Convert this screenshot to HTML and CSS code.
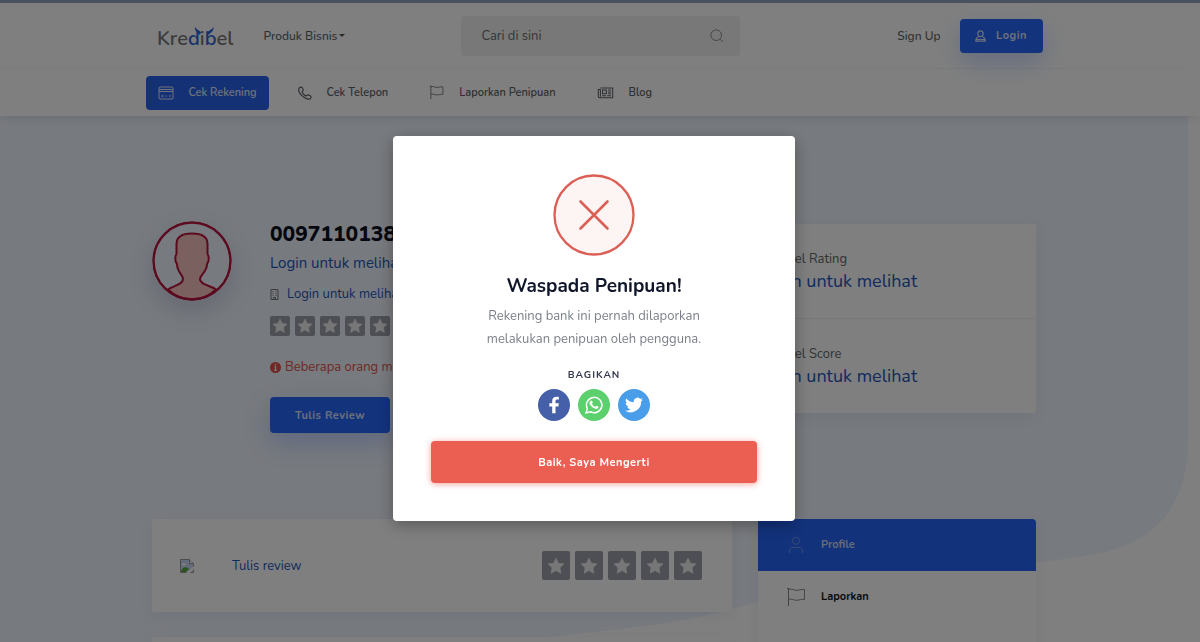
FILE: index.html
```html
<!DOCTYPE html>
<html lang="id">
<head>
  <meta charset="UTF-8">
  <meta name="viewport" content="width=device-width, initial-scale=1">
  <title>Kredibel</title>
  <link rel="stylesheet" href="styles.css">
</head>
<body class="modal-open">
  <svg class="sprite" aria-hidden="true">
    <symbol id="star" viewBox="0 0 24 24"><path d="M12 1.5l3.2 6.7 7.3 1-5.3 5.1 1.3 7.3L12 18l-6.5 3.6 1.3-7.3L1.5 9.2l7.3-1z" stroke="currentColor" stroke-linejoin="round" fill="currentColor"/></symbol>
    <symbol id="flag" viewBox="0 0 20 20"><path d="M2.500 19V1.500M2.500 2.500c3-1.500 5 .8 8 .8s4.500-1.300 8-.8v10c-3.500-.6-5 .8-8 .8s-5-2-8-.8M1 1.500h2" fill="none" stroke="currentColor"/></symbol>
    <symbol id="news" viewBox="0 0 20 16"><path d="M4 2h14.500v11.500H3A1.500 1.500 0 0 1 1.500 12V4H4v8.500M6.500 4.500h4.500v4.500H6.500zM13 4.500h3.500M13 6.700h3.500M13 9h3.500M6 11.300h4.500M12 11.300h4.500" fill="none" stroke="currentColor" stroke-width="1.200"/></symbol>
  </svg>

  <div class="topline"></div>
  <header class="header">
    <div class="header-top">
      <div class="header-inner">
        <a href="#" class="logo" aria-label="Kredibel">
          <svg width="78" height="34" viewBox="0 0 78 34">
            <text x="0" y="26" class="logo-text">Kre<tspan class="logo-blue">d</tspan>i<tspan class="logo-blue">b</tspan>el</text>
            <path class="logo-flame" d="M42.500 16c-1-2.500-5.500-3.500-4.500-8.500.8 3.500 5.500 3.500 6 6.500zM52 16c1-2.500 5.500-3.500 4.500-8.500-.8 3.500-5.500 3.500-6 6.500z"/>
          </svg>
        </a>
        <a href="#" class="menu-link">Produk Bisnis<span class="caret"></span></a>
        <form class="search">
          <input type="text" placeholder="Cari di sini" aria-label="Cari di sini">
          <button type="button" aria-label="Cari">
            <svg width="14" height="14" viewBox="0 0 14 14"><path d="M10.200 10.200L13 13M11.500 6.200a5.300 5.300 0 1 1-10.600 0 5.300 5.300 0 0 1 10.600 0z" fill="none" stroke="currentColor"/></svg>
          </button>
        </form>
        <a href="#" class="menu-link signup">Sign Up</a>
        <button type="button" class="btn btn-login">
          <svg width="11" height="12" viewBox="0 0 11 12"><path d="M8.200 3.800a2.700 2.900 0 1 1-5.400 0 2.700 2.900 0 0 1 5.400 0zM3.500 6.800C1.500 7.500.8 8.700.8 11.200h9.400c0-2.500-.7-3.700-2.700-4.400M1 9.500h9" fill="none" stroke="currentColor" stroke-width="1.200"/></svg>
          Login
        </button>
      </div>
    </div>
    <nav class="header-inner tabs">
      <a href="#" class="tab active">
        <svg width="16" height="14" viewBox="0 0 16 14"><path d="M2 1h12a1 1 0 0 1 1 1v10a1 1 0 0 1-1 1H2a1 1 0 0 1-1-1V2a1 1 0 0 1 1-1zM1 3.500h14M1 5.500h14M3 10h3M7.500 10h1.500M11 10h2" fill="none" stroke="currentColor"/></svg>
        Cek Rekening
      </a>
      <a href="#" class="tab">
        <svg width="14" height="14" viewBox="0 0 14 14"><path d="M1.500 1.500C4 0 5 2.500 5.200 4c0 1-1.500 1.200-1 2.300.8 1.600 2 2.800 3.600 3.600 1 .4 1.200-1.100 2.200-1.100 1.600.2 4 1.400 2.600 3.500C9.500 16-2 6.500 1.500 1.500z" fill="none" stroke="currentColor" stroke-width="1.200"/></svg>
        Cek Telepon
      </a>
      <a href="#" class="tab">
        <svg width="15" height="15"><use href="#flag"/></svg>
        Laporkan Penipuan
      </a>
      <a href="#" class="tab">
        <svg width="17" height="14"><use href="#news"/></svg>
        Blog
      </a>
    </nav>
  </header>

  <main class="main">
    <svg class="main-bg" viewBox="0 0 1188 560" preserveAspectRatio="none" aria-hidden="true">
      <path d="M0 0H1188V325C1188 395 1150 430 1090 439C1000 455 850 460 732 493C640 518 560 514 460 535C300 560 100 560 0 560z"/>
    </svg>

    <section class="container hero">
      <svg class="avatar" width="80" height="80" viewBox="0 0 80 80">
        <path d="M16 68.500C20 65 31 64 31 58C31 54 25 51 25 43C22.500 40 23 35 24.500 33V23C24.500 15 31 12.500 40 12.500S55.500 15 55.500 23V33C57 35 57.500 40 55 43C55 51 48 54 48 58C48 64 60 65 64 68.500C50 82 30 82 16 68.500z" fill="#f5c0bc" stroke="#b8143f" stroke-width="2"/>
        <circle cx="40" cy="40" r="38.500" fill="none" stroke="#b8143f" stroke-width="2.500"/>
      </svg>
      <div class="account">
        <h1>0097110138</h1>
        <a href="#" class="account-name">Login untuk melihat</a>
        <a href="#" class="account-bank">
          <svg width="9" height="11" viewBox="0 0 9 11"><path d="M1 10.500V.5h7v10zM2.500 2.500h1M5.500 2.500h1M2.500 4.500h1M5.500 4.500h1M2.500 6.500h1M5.500 6.500h1M3.500 10V8.500h2V10" fill="none" stroke="#777"/></svg>
          Login untuk melihat
        </a>
        <div class="stars">
          <span><svg><use href="#star"/></svg></span>
          <span><svg><use href="#star"/></svg></span>
          <span><svg><use href="#star"/></svg></span>
          <span><svg><use href="#star"/></svg></span>
          <span><svg><use href="#star"/></svg></span>
        </div>
        <p class="warning">
          <svg width="11" height="11" viewBox="0 0 11 11"><circle cx="5.500" cy="5.500" r="5.500" fill="currentColor"/><path d="M5.500 2v1.500M4.500 5h1v3M4.200 8.300h2.600" stroke="#f0f5ff" stroke-width="1.300"/></svg>
          Beberapa orang
          melaporkan
        </p>
        <button type="button" class="btn btn-review">Tulis Review</button>
      </div>
      <div class="card scores">
        <div class="score">
          <p>Kredibel Rating</p>
          <a href="#">Login untuk melihat</a>
        </div>
        <div class="score">
          <p>Kredibel Score</p>
          <a href="#">Login untuk melihat</a>
        </div>
      </div>
    </section>

    <section class="container content">
      <div class="reviews">
        <div class="card review">
          <svg width="14" height="14" viewBox="0 0 14 14"><path d="M.5 .5h9l4 4v9H.5z" fill="#c8d7f5" stroke="#999"/><path d="M9.500 .5v4h4" fill="#fff" stroke="#999"/><path d="M1 13c1-5 5-6 8-3l-3 3z" fill="#54a63c"/><path d="M2 5.500c0-2 3-2 3.500-.5 1 0 1 1.500 0 1.500H2z" fill="#fff"/><path d="M6 14l8-7v3l-4 4z" fill="#fff"/></svg>
          <a href="#">Tulis review</a>
          <div class="stars stars-lg">
            <span><svg><use href="#star"/></svg></span>
            <span><svg><use href="#star"/></svg></span>
            <span><svg><use href="#star"/></svg></span>
            <span><svg><use href="#star"/></svg></span>
            <span><svg><use href="#star"/></svg></span>
          </div>
        </div>
        <div class="card review"></div>
      </div>
      <aside class="card side">
        <a href="#" class="side-item active">
          <svg width="20" height="20" viewBox="0 0 20 20"><path d="M13.500 5.800a3.500 3.500 0 1 1-7 0 3.500 3.500 0 0 1 7 0zM3.500 18v-2c0-2 1.500-3.500 3.500-3.500h6c2 0 3.500 1.500 3.500 3.500v2" fill="none" stroke="currentColor"/></svg>
          Profile
        </a>
        <a href="#" class="side-item">
          <svg width="20" height="20"><use href="#flag"/></svg>
          Laporkan
        </a>
        <a href="#" class="side-item" aria-label="Blog">
          <svg width="20" height="20"><use href="#news"/></svg>
        </a>
      </aside>
    </section>
  </main>

  <div class="overlay">
    <div class="modal" role="dialog" aria-modal="true" aria-labelledby="modal-title">
      <svg class="modal-icon" width="82" height="82" viewBox="0 0 82 82">
        <circle cx="41" cy="41" r="39.500" fill="#fdf5f4" stroke="#dc5f56" stroke-width="2.300"/>
        <path d="M27.500 27.500l27 27M54.500 27.500l-27 27" stroke="#dc5f56" stroke-width="2.600" stroke-linecap="round"/>
      </svg>
      <h2 id="modal-title">Waspada Penipuan!</h2>
      <p class="modal-text">Rekening bank ini pernah dilaporkan<br>melakukan penipuan oleh pengguna.</p>
      <p class="share-title">BAGIKAN</p>
      <div class="share">
        <a href="#" class="facebook" aria-label="Facebook">
          <svg width="18" height="18" viewBox="0 0 24 24"><path d="M14 23v-9h3.800l.7-4.200H14V7c0-1.300.6-2.200 2.500-2.200h2V1.200C18 1.100 17 1 15.500 1 12 1 9.600 3 9.600 6.500v3.300H5.800V14h3.800v9z" fill="currentColor"/></svg>
        </a>
        <a href="#" class="whatsapp" aria-label="WhatsApp">
          <svg width="18" height="18" viewBox="0 0 24 24"><path d="M1.500 22.500l1.600-5.800A10.300 10.300 0 1 1 7.200 21z" fill="none" stroke="currentColor" stroke-width="2"/><path d="M7.500 6.500c.7-.8 1.700-.6 2 .2l.8 2c.2.700-.9 1.400-.9 1.900.9 1.800 2.300 3 4.200 3.800.6 0 1.200-1.500 1.800-1.500l2.300 1.200c.6.300.1 2-.8 2.600-1.200.9-2.700.7-4.200.1-2.700-1.100-4.900-3.200-6.300-5.700-.8-1.600-.4-3.400 1.100-4.600z" fill="currentColor"/></svg>
        </a>
        <a href="#" class="twitter" aria-label="Twitter">
          <svg width="18" height="18" viewBox="0 0 24 24"><path d="M24 4.600a10 10 0 0 1-2.800.8 5 5 0 0 0 2.100-2.700 10 10 0 0 1-3.100 1.200 4.900 4.900 0 0 0-8.400 4.500A14 14 0 0 1 1.700 3.200a4.900 4.900 0 0 0 1.500 6.500 5 5 0 0 1-2.200-.6 4.900 4.900 0 0 0 3.900 4.900 5 5 0 0 1-2.200.1 4.900 4.900 0 0 0 4.600 3.400A10 10 0 0 1 0 19.500a14 14 0 0 0 21.500-12.400A10 10 0 0 0 24 4.600z" fill="currentColor"/></svg>
        </a>
      </div>
      <button type="button" class="btn btn-danger">Baik, Saya Mengerti</button>
    </div>
  </div>
</body>
</html>
```
FILE: styles.css
```css
* {
  box-sizing: border-box;
}
html,
body {
  height: 100%;
}
body {
  margin: 0;
  background: #fff;
  color: #46484d;
  font-family: Nunito, Lato, sans-serif;
  font-size: 13px;
  line-height: 20px;
}
/* page behind the dialog keeps the scrollbar gutter */
.modal-open {
  overflow: hidden;
  padding-right: 12px;
}
a {
  color: #2456b8;
  text-decoration: none;
}
h1, h2, p {
  margin: 0;
}
svg {
  display: block;
  flex-shrink: 0;
}
.sprite {
  position: absolute;
  width: 0;
  height: 0;
}
.topline {
  height: 3px;
  margin-right: -12px;
  background: #94a6c0;
}

/* Buttons */
.btn {
  border: none;
  border-radius: 4px;
  background: #2666fa;
  color: #d8e0f5;
  font-family: inherit;
  font-size: 11px;
  font-weight: bold;
  letter-spacing: 0.5px;
  cursor: pointer;
}
.btn-login {
  display: flex;
  align-items: center;
  justify-content: center;
  gap: 10px;
  width: 83px;
  height: 34px;
  margin-left: 19px;
  box-shadow: 0 10px 24px rgba(38, 102, 250, 0.25);
}
.btn-review {
  width: 120px;
  height: 36px;
  margin-top: 20px;
  box-shadow: 0 10px 24px rgba(38, 102, 250, 0.25);
}

/* Header */
.header {
  position: relative;
  z-index: 1;
  margin-right: -12px;
  padding-right: 12px;
  background: #fff;
  box-shadow: 0 2px 10px rgba(0, 0, 0, 0.1);
}
.header-top {
  border-bottom: 1px solid #f6f6f6;
}
.header-inner {
  display: flex;
  align-items: center;
  width: 76%;
  max-width: 897px;
  margin: 0 auto;
}
.header-top .header-inner {
  height: 65px;
}
.logo {
  margin-left: 11px;
}
.logo-text {
  fill: #777;
  font-size: 20px;
  font-weight: 600;
}
.logo-blue,
.logo-flame {
  fill: #2f66d8;
}
.menu-link {
  color: #5c5f66;
  font-size: 12px;
  font-weight: 500;
}
.logo + .menu-link {
  margin-left: 29px;
}
.caret {
  display: inline-block;
  margin-left: 2px;
  vertical-align: 3px;
  border: 3px solid transparent;
  border-top-color: #555;
  border-bottom: 0;
}
.search {
  display: flex;
  align-items: center;
  width: 279px;
  height: 40px;
  margin-left: 116px;
  padding: 0 16px 0 20px;
  border-radius: 4px;
  background: #f0f0f0;
}
.search input {
  flex: 1;
  min-width: 0;
  border: none;
  background: none;
  padding: 0;
  font: inherit;
}
.search input::placeholder {
  color: #6c6c6c;
}
.search button {
  padding: 0;
  border: none;
  background: none;
  color: #8c8c8c;
}
.signup {
  margin-left: auto;
}
.tabs {
  height: 47px;
}
.tab {
  display: flex;
  align-items: center;
  gap: 15px;
  height: 34px;
  margin-right: 41px;
  color: #5c5f66;
  font-size: 11px;
  font-weight: 600;
}
.tab.active {
  margin-right: 29px;
  padding: 0 12px;
  border-radius: 4px;
  background: #2a62ec;
  color: #dde5f5;
}

/* Main */
.main {
  position: relative;
}
.main-bg {
  position: absolute;
  top: 0;
  left: 0;
  width: 100%;
  height: 560px;
  fill: #eff4fd;
}
.container {
  position: relative;
  display: flex;
  width: 75%;
  max-width: 884px;
  margin: 0 auto;
}
.hero {
  align-items: flex-start;
  padding-top: 105px;
}
.avatar {
  border-radius: 50%;
  box-shadow: 0 10px 24px rgba(60, 80, 120, 0.2);
}
.account {
  flex: 1;
  min-width: 0;
  margin-left: 38px;
}
.account h1 {
  color: #0a0f1e;
  font-size: 21px;
  font-weight: 800;
  line-height: 26px;
}
.account-name {
  display: block;
  margin-top: 6px;
  font-size: 15px;
}
.account-bank {
  display: flex;
  align-items: center;
  gap: 8px;
  margin-top: 11px;
}
.stars {
  display: flex;
  gap: 5px;
  margin-top: 12px;
}
.stars span {
  display: grid;
  place-items: center;
  width: 20px;
  height: 20px;
  border-radius: 2px;
  background: #9a9ea8;
  color: #eee;
}
.stars svg {
  width: 16px;
  height: 16px;
}
.stars-lg {
  margin: 0 0 0 auto;
}
.stars-lg span {
  width: 28px;
  height: 29px;
}
.stars-lg svg {
  width: 18px;
  height: 18px;
}
.warning {
  display: flex;
  align-items: center;
  gap: 4px;
  margin-top: 21px;
  color: #e05248;
}
.card {
  border-radius: 3px;
  background: #fff;
  box-shadow: 0 4px 14px rgba(60, 90, 150, 0.08);
}
.scores {
  width: 315px;
  margin-top: 3px;
}
.score {
  padding: 25px 36px 24px;
}
.score + .score {
  border-top: 1px solid #eee;
}
.score p {
  color: #666;
}
.score a {
  font-size: 18px;
  line-height: 25px;
}

.content {
  gap: 26px;
  align-items: flex-start;
  margin-top: 86px;
}
.reviews {
  flex: 1;
}
.review {
  display: flex;
  align-items: center;
  height: 93px;
  margin-bottom: 25px;
  padding: 0 30px 0 28px;
}
.review a {
  margin-left: 38px;
}
.side {
  width: 278px;
}
.side-item {
  display: flex;
  align-items: center;
  gap: 15px;
  height: 52px;
  padding: 0 28px;
  color: #12161f;
  font-size: 11px;
  font-weight: bold;
}
.side-item svg {
  color: #888;
}
.side-item.active {
  border-radius: 4px 4px 0 0;
  background: #2464f6;
  color: #ccd6f0;
}
.side-item.active svg {
  color: #6f94e8;
}

/* Dialog */
.overlay {
  position: fixed;
  inset: 0;
  z-index: 10;
  display: flex;
  justify-content: center;
  align-items: flex-start;
  padding: 136px 12px 0 0;
  background: rgba(0, 0, 0, 0.5);
}
.modal {
  display: flex;
  flex-direction: column;
  align-items: center;
  width: 402px;
  max-width: 100%;
  padding: 38px;
  border-radius: 4px;
  background: #fff;
  box-shadow: 0 4px 16px rgba(0, 0, 0, 0.3);
}
.modal h2 {
  margin-top: 17px;
  color: #10162a;
  font-size: 19px;
  font-weight: bold;
  line-height: 26px;
}
.modal-text {
  margin-top: 6px;
  color: #7c8089;
  line-height: 23px;
  text-align: center;
}
.share-title {
  margin-top: 14px;
  color: #34384c;
  font-size: 10px;
  font-weight: bold;
  letter-spacing: 1px;
}
.share {
  display: flex;
  gap: 8px;
  margin-top: 4px;
}
.share a {
  display: grid;
  place-items: center;
  width: 32px;
  height: 32px;
  border-radius: 50%;
  color: #fff;
}
.share .facebook {
  background: #4560a8;
}
.share .whatsapp {
  background: #5bd06c;
}
.share .twitter {
  background: #4a9de8;
}
.btn-danger {
  width: 100%;
  height: 42px;
  margin-top: 20px;
  background: #eb5f53;
  color: #fff;
  box-shadow: 0 1px 6px rgba(235, 95, 83, 0.6);
}
```
